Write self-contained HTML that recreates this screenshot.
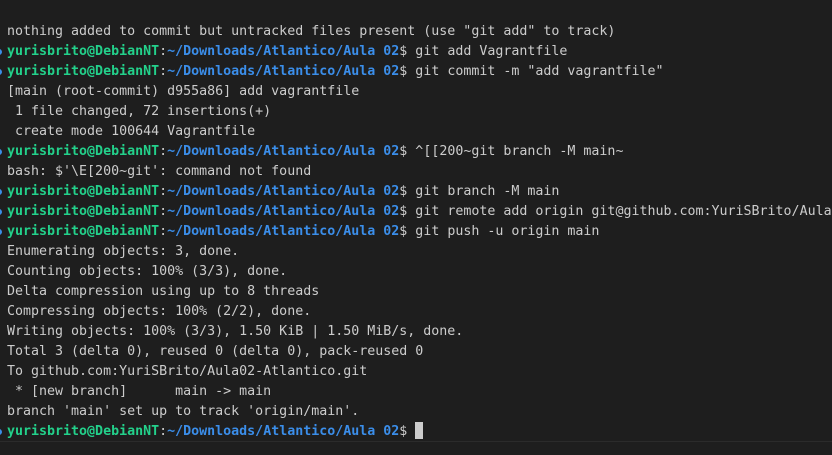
<!DOCTYPE html><html><head><style>
body{margin:0;width:832px;height:455px;background:#1e1e1e;overflow:hidden;position:relative}
pre{margin:0;position:absolute;left:7px;top:22px;width:825px;overflow:hidden;font-family:"DejaVu Sans Mono","Liberation Mono",monospace;font-size:13.3px;line-height:20px;color:#cccccc}
.g{color:#23d18b;font-weight:bold}.b{color:#3b8eea;font-weight:bold}
.d{position:absolute;left:-4px;width:6px;height:6px;border-radius:50%;background:#3b8eea}
.c{display:inline-block;width:8px;height:17px;background:#cccccc;vertical-align:-4px}
.sep{position:absolute;left:0;right:0;top:441px;height:1px;background:#2b2b2b}
</style></head><body>
<div class="d" style="top:49px"></div><div class="d" style="top:69px"></div><div class="d" style="top:149px"></div><div class="d" style="top:189px"></div><div class="d" style="top:209px"></div><div class="d" style="top:229px"></div><div class="d" style="top:429px"></div>
<pre>nothing added to commit but untracked files present (use "git add" to track)
<span class="g">yurisbrito@DebianNT</span>:<span class="b">~/Downloads/Atlantico/Aula 02</span>$ git add Vagrantfile
<span class="g">yurisbrito@DebianNT</span>:<span class="b">~/Downloads/Atlantico/Aula 02</span>$ git commit -m "add vagrantfile"
[main (root-commit) d955a86] add vagrantfile
 1 file changed, 72 insertions(+)
 create mode 100644 Vagrantfile
<span class="g">yurisbrito@DebianNT</span>:<span class="b">~/Downloads/Atlantico/Aula 02</span>$ ^[[200~git branch -M main~
bash: $'\E[200~git': command not found
<span class="g">yurisbrito@DebianNT</span>:<span class="b">~/Downloads/Atlantico/Aula 02</span>$ git branch -M main
<span class="g">yurisbrito@DebianNT</span>:<span class="b">~/Downloads/Atlantico/Aula 02</span>$ git remote add origin git@github.com:YuriSBrito/Aula
<span class="g">yurisbrito@DebianNT</span>:<span class="b">~/Downloads/Atlantico/Aula 02</span>$ git push -u origin main
Enumerating objects: 3, done.
Counting objects: 100% (3/3), done.
Delta compression using up to 8 threads
Compressing objects: 100% (2/2), done.
Writing objects: 100% (3/3), 1.50 KiB | 1.50 MiB/s, done.
Total 3 (delta 0), reused 0 (delta 0), pack-reused 0
To github.com:YuriSBrito/Aula02-Atlantico.git
 * [new branch]      main -&gt; main
branch 'main' set up to track 'origin/main'.
<span class="g">yurisbrito@DebianNT</span>:<span class="b">~/Downloads/Atlantico/Aula 02</span>$ <span class="c"></span></pre>
<div class="sep"></div>
</body></html>
